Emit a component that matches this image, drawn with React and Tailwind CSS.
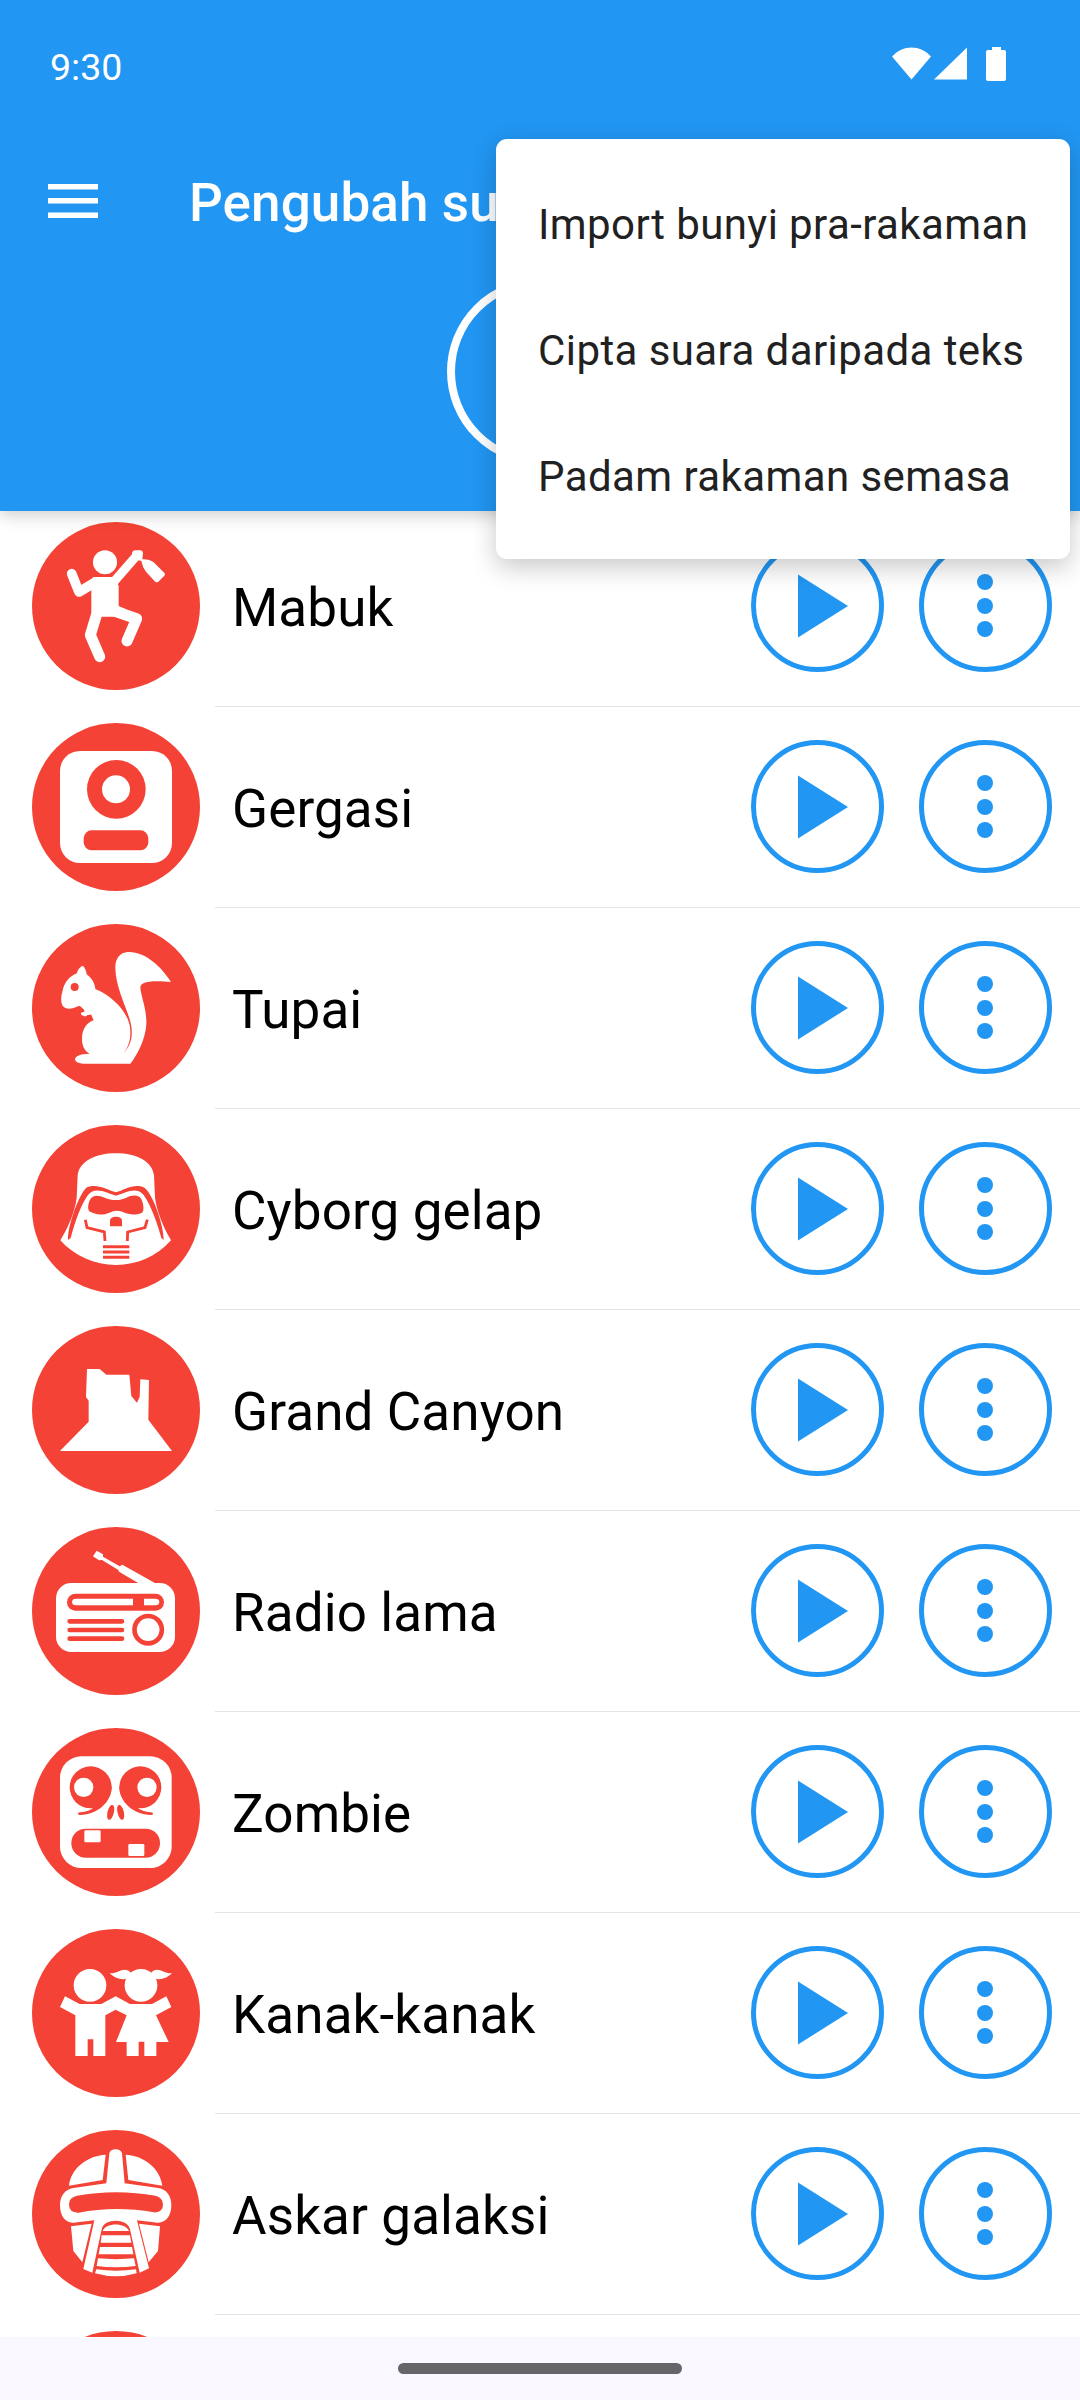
import React from 'react';

const MENU_ITEMS = ['Import bunyi pra-rakaman', 'Cipta suara daripada teks', 'Padam rakaman semasa'];

const RED = '#f44336';

// Drunk
function DrunkIcon() {
  return <svg viewBox="36 36 504 504" className="h-[168px] w-[168px]">
      <circle cx="288" cy="288" r="252" fill={RED} />
      <circle cx="255" cy="157" r="36" fill="#fff" />
      <g fill="none" stroke="#fff" strokeLinejoin="round" strokeLinecap="round">
        <path d="M155 191L177 246L222 219" strokeWidth="29" />
        <path d="M282 215L350 137" strokeWidth="27" strokeLinecap="butt" />
        <path d="M229 316L211 375L239 440" strokeWidth="33" />
        <path d="M285 304L350 326L321 393" strokeWidth="33" />
      </g>
      <path d="M220 201H284L296 228V288L318 298L290 320H214V238L190 236Z" fill="#fff" />
      <path d="M336 128Q339 120 348 121L362 121Q369 122 369 130L367 148Q388 147 401 157L434 190Q437 193 433 197L415 215Q409 219 404 214L378 185Q367 171 364 153L338 146Z" fill="#fff" />
    </svg>;
}

// Giant
function GiantIcon() {
  return <svg viewBox="36 39 504 504" className="h-[168px] w-[168px]">
      <circle cx="288" cy="291" r="252" fill={RED} />
      <rect x="120" y="123" width="336" height="336" rx="60" fill="#fff" />
      <circle cx="289" cy="238" r="88" fill={RED} />
      <circle cx="288" cy="238" r="42" fill="#fff" />
      <rect x="191" y="361" width="194" height="60" rx="24" fill={RED} />
    </svg>;
}

// Squirrel
function SquirrelIcon() {
  return <svg viewBox="36 42 504 504" className="h-[168px] w-[168px]">
      <circle cx="288" cy="294" r="252" fill={RED} />
      <path d="M331 461L190 461C174 460 165 455 165 448C166 438 179 432 209 431C193 422 186 407 186 386C186 359 200 337 221 331L213 313C207 317 204 313 200 317Q195 321 190 317Q181 315 183 308L193 305Q195 300 187 295Q181 286 176 288C158 297 138 300 129 289C122 279 122 260 127 245C132 219 147 199 171 190C172 180 180 170 189 167C194 173 200 184 200 193C215 204 225 220 226 237C274 256 320 302 329 346C334 374 331 402 312 428C331 408 339 381 334 350C329 309 287 240 286 175C285 147 299 127 324 126C374 124 423 168 453 216C425 213 386 212 372 219C359 224 360 232 363 247C370 279 380 306 379 341C377 388 350 437 331 461Z" fill="#fff" />
      <circle cx="164" cy="231" r="12" fill={RED} />
    </svg>;
}

// Dark cyborg
function CyborgIcon() {
  return <svg viewBox="36 39 504 504" className="h-[168px] w-[168px]">
      <circle cx="288" cy="291" r="252" fill={RED} />
      <path d="M121 385C145 345 165 300 170 257L173 190C178 148 226 124 288 124C350 124 397 148 402 190L405 257C411 300 430 345 453 385C410 434 350 459 288 459C224 459 164 433 121 385Z" fill="#fff" />
      <path d="M144 384C142 343 178 243 201 226C229 213 264 234 288 241C311 234 343 213 371 226C398 241 432 343 431 384L424 378C414 340 393 280 371 249C350 221 313 244 288 251C263 244 225 221 204 249C181 280 162 340 152 378Z" fill={RED} />
      <path d="M210 263C218 247 236 249 254 257C276 267 300 266 319 257C338 248 358 248 365 263C371 278 373 296 366 302C350 310 327 309 307 299C291 294 282 295 268 302C245 312 224 307 208 298C202 290 204 275 210 263Z" fill={RED} />
      <path d="M270 343V326C270 310 306 310 306 326V343Z" fill={RED} />
      <path d="M196 323L201 347L253 360L255 387M382 323L375 347L323 360L322 387" fill="none" stroke={RED} strokeWidth="8.500" />
      <path d="M249 404H328M249 420H328M249 436H328" fill="none" stroke={RED} strokeWidth="9" />
    </svg>;
}

function CanyonIcon() {
  return <svg viewBox="36 42 504 504" className="h-[168px] w-[168px]">
      <circle cx="288" cy="294" r="252" fill={RED} />
      <path d="M120 417L206 329V266L198 255L201 171H239L259 188H328L334 252L351 272L359 254L361 202L387 204L385 323L456 417Z" fill="#fff" />
    </svg>;
}

function RadioIcon() {
  return <svg viewBox="36 39 504 504" className="h-[168px] w-[168px]">
      <circle cx="288" cy="291" r="252" fill={RED} />
      <rect x="108" y="207" width="357" height="207" rx="46" fill="#fff" />
      <path d="M356 208L297 173L295 168L246 138L237 139L219 127L230 110L249 121V128L299 157L307 152L406 208Z" fill="#fff" />
      <rect x="141" y="239" width="291" height="51" rx="25.500" fill={RED} />
      <path d="M169 254H339V274H169Q156 274 156 264Q156 254 169 254ZM372 254H405Q418 254 418 264Q418 274 405 274H372Z" fill="#fff" />
      <path d="M149 322H306M149 348H306M149 374H306" stroke={RED} strokeWidth="14" strokeLinecap="round" />
      <circle cx="384.500" cy="347" r="41" fill="none" stroke={RED} strokeWidth="14" />
    </svg>;
}

function ZombieIcon() {
  return <svg viewBox="36 42 504 504" className="h-[168px] w-[168px]">
      <circle cx="288" cy="294" r="252" fill={RED} />
      <rect x="120" y="127" width="335" height="335" rx="64" fill="#fff" />
      <circle cx="212" cy="220" r="63" fill={RED} />
      <circle cx="361" cy="220" r="63" fill={RED} />
      <path d="M275 216C275 265 234 301 180 303Q174 303 174 299Q174 295 181 295Q207 293 222 280ZM298 216C298 265 339 301 393 303Q399 303 399 299Q399 295 392 295Q366 293 351 280Z" fill={RED} />
      <circle cx="191" cy="220" r="29" fill="#fff" />
      <circle cx="381" cy="220" r="29" fill="#fff" />
      <ellipse cx="272" cy="295" rx="9.500" ry="23" transform="rotate(14 272 295)" fill={RED} />
      <ellipse cx="302" cy="295" rx="9.500" ry="23" transform="rotate(-14 302 295)" fill={RED} />
      <rect x="154" y="344" width="266" height="87" rx="43" fill={RED} />
      <rect x="193" y="349" width="49" height="36" rx="4" fill="#fff" />
      <rect x="325" y="390" width="48" height="36" rx="4" fill="#fff" />
    </svg>;
}

function KidsIcon() {
  return <svg viewBox="36 39 504 504" className="h-[168px] w-[168px]">
      <circle cx="288" cy="291" r="252" fill={RED} />
      <circle cx="210" cy="208" r="49" fill="#fff" />
      <circle cx="363" cy="208" r="49" fill="#fff" />
      <path d="M269 172C290 173 299 161 315 161Q326 161 333 170L322 187C309 193 285 189 269 172ZM456 172C435 173 426 161 411 161Q400 161 393 170L404 187C417 193 440 189 456 172Z" fill="#fff" />
      <path d="M135 241L179 264H244L287 241L330 264H396L439 241L454 273L408 298L446 378H409V420H373V377H356V420H320V378H288L320 298L287 281L256 298V420H220V370H203V420H166V298L120 273Z" fill="#fff" />
    </svg>;
}

// Galaxy soldier
function SoldierIcon() {
  return <svg viewBox="36 42 504 504" className="h-[168px] w-[168px]">
      <circle cx="288" cy="294" r="252" fill={RED} />
      <path d="M257 116L248 192L147 209C153 157 201 119 257 116ZM317 116C373 119 420 157 427 209L325 192Z" fill="#fff" />
      <path d="M153 331L215 323L187 439L160 405ZM357 323L420 331L414 405L386 439Z" fill="#fff" />
      <path d="M268 112Q271 100 287 100Q302 100 306 112L314 202L415 216C440 220 454 240 454 268C454 300 438 321 413 320L351 313L387 457L359 470L330 340C322 306 252 306 245 340L217 470L190 459L223 313L160 320C135 321 120 300 120 268C120 240 135 220 160 216L259 202Z" fill="#fff" />
      <path d="M171 239C245 225 331 225 406 239Q429 245 429 265Q429 291 402 289C325 276 251 276 176 290Q147 291 147 265Q147 244 171 239Z" fill={RED} />
      <path d="M248 345C257 319 317 319 327 345ZM245 358H330L334 380H242ZM240 393H336L340 415H236ZM234 427Q288 432 342 427L347 450Q288 458 230 450ZM229 460Q288 468 348 460L350 472Q288 490 225 472Z" fill="#fff" />
    </svg>;
}

function NextIcon() {
  return <svg viewBox="0 0 504 504" className="h-[168px] w-[168px]">
      <circle cx="252" cy="252" r="252" fill={RED} />
    </svg>;
}

const VOICES = [
  { name: 'Mabuk', Icon: DrunkIcon },
  { name: 'Gergasi', Icon: GiantIcon },
  { name: 'Tupai', Icon: SquirrelIcon },
  { name: 'Cyborg gelap', Icon: CyborgIcon },
  { name: 'Grand Canyon', Icon: CanyonIcon },
  { name: 'Radio lama', Icon: RadioIcon },
  { name: 'Zombie', Icon: ZombieIcon },
  { name: 'Kanak-kanak', Icon: KidsIcon },
  { name: 'Askar galaksi', Icon: SoldierIcon },
  { name: '', Icon: NextIcon }
];

function VoiceRow({ name, Icon }) {
  return <li className="h-[201px] shrink-0">
      <div className="flex h-[200px] items-center pl-8 pr-7">
        <Icon />
        <span className="grow pl-8 pt-[3px] text-[53px] leading-[62px] tracking-[0.1px] text-black">{name}</span>
        <button className="mb-px mr-[35px] flex h-[133px] w-[133px] items-center justify-center rounded-full border-5 border-[#2196f3]">
          <svg viewBox="0 0 50 64" className="ml-[11px] h-16 w-[50px] fill-[#2196f3]">
            <path d="M0 0.500L50 32L0 63.500Z" />
          </svg>
        </button>
        <button className="mb-px flex h-[133px] w-[133px] flex-col items-center justify-center gap-[7.5px] rounded-full border-5 border-[#2196f3] pr-px">
          <span className="h-4 w-4 rounded-full bg-[#2196f3]" />
          <span className="h-4 w-4 rounded-full bg-[#2196f3]" />
          <span className="h-4 w-4 rounded-full bg-[#2196f3]" />
        </button>
      </div>
      <div className="ml-[215px] h-px bg-[#e4e4e4]" />
    </li>;
}

function StatusBar() {
  return <div className="flex h-[132px] items-center justify-between pl-[50px] pr-[74px] text-white">
      <span className="pt-px text-[37.5px] leading-[44px]">9:30</span>
      <svg viewBox="0 0 114 34" className="mb-[4px] h-[34px] w-[114px] fill-white">
        <path d="M0 9.500C11 -2.500 28 -2.500 39 9.500L19.500 32.500Z" />
        <path d="M75 0.500V32.500H42Z" />
        <path d="M100 0H109V3H112Q114 3 114 5V32Q114 34 112 34H96Q94 34 94 32V5Q94 3 96 3H100Z" />
      </svg>
    </div>;
}

export default function App() {
  return <div className="relative flex h-[2400px] w-[1080px] flex-col overflow-hidden bg-white font-[Roboto,sans-serif]">
      <header className="z-10 h-[511px] shrink-0 bg-[#2196f3] shadow-[0_4px_16px_rgba(0,0,0,0.2)]">
        <StatusBar />
        <div className="flex h-[142px] items-center pl-12">
          <svg viewBox="0 0 50 34" className="mb-1 h-[34px] w-[50px] fill-white">
            <path d="M0 0H50V5.500H0ZM0 14H50V19.500H0ZM0 28.500H50V34H0Z" />
          </svg>
          <h1 className="pl-[91px] text-[53px] font-medium leading-[62px] tracking-[0.1px] text-white">Pengubah suara</h1>
        </div>
        {/* record button */}
        <div className="mx-auto mt-1 h-[187px] w-[187px] rounded-full border-8 border-white" />
      </header>

      <ul className="-mt-[5px] flex h-[1831px] shrink-0 flex-col overflow-hidden">
        {VOICES.map((voice, i) => <VoiceRow key={i} {...voice} />)}
      </ul>

      <footer className="flex h-[63px] shrink-0 items-center justify-center bg-[#f9f7ff]">
        <div className="h-[11px] w-[284px] rounded-full bg-[#66656a]" />
      </footer>

      {/* overflow menu */}
      <div className="absolute left-[496px] top-[139px] z-20 h-[420px] w-[574px] rounded-[11px] bg-white py-[22px] shadow-[0_8px_26px_rgba(0,0,0,0.22)]">
        {MENU_ITEMS.map(item => <div key={item} className="flex h-[126px] items-center whitespace-nowrap pl-[42px] text-[42px] tracking-[0.42px] text-[#212121]">
            {item}
          </div>)}
      </div>
    </div>;
}
